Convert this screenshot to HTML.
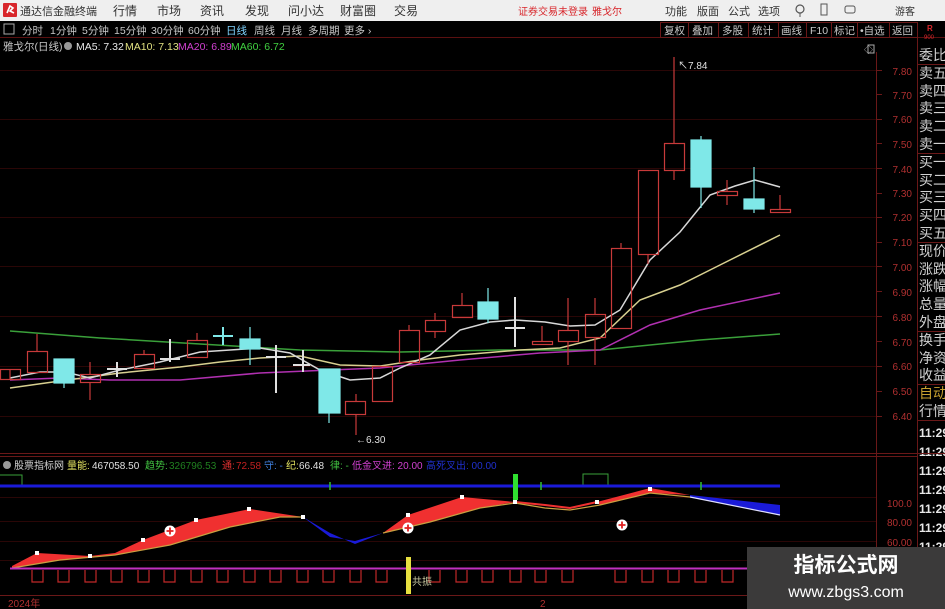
<!DOCTYPE html>
<html><head><meta charset="utf-8">
<style>
html,body{margin:0;padding:0;background:#000;width:945px;height:609px;overflow:hidden}
svg{display:block}
text{font-family:"Liberation Sans","Noto Sans CJK SC",sans-serif}
</style></head><body>
<svg width="945" height="609" viewBox="0 0 945 609" xmlns="http://www.w3.org/2000/svg">
<rect width="945" height="609" fill="#000"/>
<rect x="0" y="0" width="945" height="21" fill="#efefef"/>
<rect x="3" y="3" width="14" height="14" fill="#d8262b" rx="1"/>
<path d="M7 13 L10 6 L13 8 L10 11 L14 13" stroke="#fff" stroke-width="1.6" fill="none"/>
<g font-size="11" fill="#333">
<text x="20" y="15">通达信金融终端</text>
<text x="113" y="15" font-size="12">行情</text><text x="157" y="15" font-size="12">市场</text><text x="200" y="15" font-size="12">资讯</text><text x="245" y="15" font-size="12">发现</text><text x="288" y="15" font-size="12">问小达</text><text x="340" y="15" font-size="12">财富圈</text><text x="394" y="15" font-size="12">交易</text>
<text x="518" y="15" fill="#d8262b" font-size="10">证券交易未登录</text><text x="592" y="15" fill="#d8262b" font-size="10">雅戈尔</text>
<text x="665" y="15">功能</text><text x="697" y="15">版面</text><text x="728" y="15">公式</text><text x="758" y="15">选项</text>
<text x="895" y="15" font-size="10">游客</text>
</g>
<circle cx="800" cy="9" r="4" fill="none" stroke="#555" stroke-width="1.2"/><path d="M800 13v4" stroke="#555"/>
<rect x="821" y="4" width="6" height="11" fill="none" stroke="#555"/>
<rect x="845" y="6" width="10" height="7" rx="2" fill="none" stroke="#555"/>
<line x1="0" y1="37.5" x2="945" y2="37.5" stroke="#5a1010"/>
<rect x="4" y="24" width="10" height="10" fill="none" stroke="#aaa"/>
<g font-size="10.5" fill="#c8c8c8">
<text x="22" y="34">分时</text><text x="50" y="34">1分钟</text><text x="82" y="34">5分钟</text><text x="114" y="34">15分钟</text><text x="151" y="34">30分钟</text><text x="188" y="34">60分钟</text><text x="226" y="34" fill="#7fd3ff">日线</text><text x="254" y="34">周线</text><text x="281" y="34">月线</text><text x="308" y="34">多周期</text><text x="344" y="34">更多 ›</text>
</g>
<g stroke="#6a1818" fill="none">
<rect x="660.5" y="22.5" width="257" height="15"/>
<path d="M688.5 22v16M718.5 22v16M748.5 22v16M778.5 22v16M806.5 22v16M831.5 22v16M857.5 22v16M889.5 22v16"/>
</g>
<g font-size="10.5" fill="#c8c8c8">
<text x="664" y="34">复权</text><text x="692" y="34">叠加</text><text x="722" y="34">多股</text><text x="752" y="34">统计</text><text x="781" y="34">画线</text><text x="810" y="34">F10</text><text x="834" y="34">标记</text><text x="860" y="34">•自选</text><text x="892" y="34">返回</text>
</g>
<text x="927" y="31" fill="#d8262b" font-size="8" font-weight="bold">R</text>
<text x="924" y="39" fill="#d8262b" font-size="6">900</text>
<g font-size="10.5">
<text x="3" y="50" fill="#c8c8c8">雅戈尔(日线)</text>
<circle cx="68" cy="46" r="4" fill="#999"/>
<text x="76" y="50" fill="#e8e8e8">MA5: 7.32</text>
<text x="125" y="50" fill="#e0e080">MA10: 7.13</text>
<text x="178" y="50" fill="#d040d0">MA20: 6.89</text>
<text x="231" y="50" fill="#40d040">MA60: 6.72</text>
</g>
<g stroke="#2a0606" stroke-width="1">
<path d="M0 70.5H876M0 119.5H876M0 168.5H876M0 217.5H876M0 266.5H876M0 316.5H876M0 366.5H876M0 416.5H876"/>
</g>
<line x1="876.5" y1="52" x2="876.5" y2="595" stroke="#6a1818"/>
<line x1="917.5" y1="38" x2="917.5" y2="609" stroke="#6a1818"/>
<g font-size="10" fill="#b03030" text-anchor="end">
<text x="912" y="75">7.80</text><text x="912" y="99">7.70</text><text x="912" y="123">7.60</text><text x="912" y="148">7.50</text><text x="912" y="173">7.40</text><text x="912" y="197">7.30</text><text x="912" y="221">7.20</text><text x="912" y="246">7.10</text><text x="912" y="271">7.00</text><text x="912" y="296">6.90</text><text x="912" y="321">6.80</text><text x="912" y="346">6.70</text><text x="912" y="370">6.60</text><text x="912" y="395">6.50</text><text x="912" y="420">6.40</text>
</g>
<g stroke="#6a1818"><path d="M876 70.5h6M876 94.5h6M876 119.5h6M876 143.5h6M876 168.5h6M876 193.5h6M876 217.5h6M876 242.5h6M876 266.5h6M876 291.5h6M876 316.5h6M876 341.5h6M876 366.5h6M876 391.5h6M876 416.5h6"/></g>
<text x="864" y="53" fill="#aaa" font-size="9">◇</text><rect x="868" y="45" width="6" height="8" fill="none" stroke="#aaa"/>
<g font-size="14" fill="#d0d0d0">
<text x="919" y="60">委比</text>
<text x="919" y="78">卖五</text><text x="919" y="96">卖四</text><text x="919" y="113">卖三</text><text x="919" y="131">卖二</text><text x="919" y="149">卖一</text>
<text x="919" y="167">买一</text><text x="919" y="185">买二</text><text x="919" y="202">买三</text><text x="919" y="220">买四</text><text x="919" y="238">买五</text>
<text x="919" y="256">现价</text><text x="919" y="274">涨跌</text><text x="919" y="291">涨幅</text><text x="919" y="309">总量</text><text x="919" y="327">外盘</text>
<text x="919" y="345">换手</text><text x="919" y="363">净资</text><text x="919" y="380">收益</text>
<text x="919" y="398" fill="#c8a030">自动</text><text x="919" y="416">行情</text>
</g>
<g stroke="#6a1818"><path d="M917 64.5H945M917 153.5H945M917 242.5H945M917 331.5H945M917 384.5H945M917 420.5H945"/></g>
<g font-size="12" fill="#e8e8e8" font-weight="bold">
<text x="919" y="437">11:29</text><text x="919" y="456">11:29</text><text x="919" y="475">11:29</text><text x="919" y="494">11:29</text><text x="919" y="513">11:29</text><text x="919" y="532">11:29</text><text x="919" y="551">11:29</text><text x="919" y="570">11:29</text><text x="919" y="590">11:29</text>
</g>
<g fill="none" stroke-width="1.5">
<polyline stroke="#3aa03a" points="10,331 100,338 200,344 300,350 400,352 500,350 600,350 700,340 780,334"/>
<polyline stroke="#b030b0" points="10,380 60,378 110,380 180,380 260,373 330,370 380,368 460,360 540,353 600,350 650,325 700,310 780,293"/>
<polyline stroke="#d8d090" points="10,388 60,381 120,373 180,367 220,362 260,358 300,356 340,365 380,366 420,360 460,355 520,350 560,348 600,338 640,300 680,285 720,265 780,235"/>
<polyline stroke="#d8d8d8" points="10,378 40,372 65,372 90,378 120,370 160,362 200,352 230,350 260,348 290,353 320,370 350,380 380,378 400,368 430,355 460,330 490,322 515,320 545,322 570,326 595,325 620,310 650,260 680,232 710,195 735,186 755,180 780,187"/>
</g>
<g stroke-width="1.2">
<g stroke="#c83a3a" fill="none">
<path d="M10 369v10"/><rect x="0.5" y="369.5" width="20" height="10"/>
<path d="M37 334v17"/><rect x="27.5" y="351.5" width="20" height="21"/>
<path d="M90 362v12M90 382v18"/><rect x="80.5" y="374.5" width="20" height="8"/>
<path d="M144 350v4"/><rect x="134.5" y="354.5" width="20" height="14"/>
<path d="M197 333v7"/><rect x="187.5" y="340.5" width="20" height="17"/>
<path d="M356 394v7M356 414v21"/><rect x="345.5" y="401.5" width="20" height="13"/>
<rect x="372.5" y="366.5" width="20" height="35"/>
<path d="M409 325v5"/><rect x="399.5" y="330.5" width="20" height="32"/>
<path d="M435 313v7M435 331v7"/><rect x="425.5" y="320.5" width="20" height="11"/>
<path d="M462 293v12"/><rect x="452.5" y="305.5" width="20" height="12"/>
<path d="M542 326v15"/><rect x="532.5" y="341.5" width="20" height="3"/>
<path d="M568 298v32M568 341v24"/><rect x="558.5" y="330.5" width="20" height="11"/>
<path d="M595 298v16M595 337v28"/><rect x="585.5" y="314.5" width="20" height="23"/>
<path d="M621 243v5"/><rect x="611.5" y="248.5" width="20" height="80"/>
<path d="M648 254v10"/><rect x="638.5" y="170.5" width="20" height="84"/>
<path d="M674 57v86M674 170v10"/><rect x="664.5" y="143.5" width="20" height="27"/>
<path d="M727 180v12M727 195v10"/><rect x="717.5" y="191.5" width="20" height="4"/>
<path d="M780 195v15"/><rect x="770.5" y="209.5" width="20" height="3"/>
</g>
<g stroke="#7fe8e8" fill="#7fe8e8">
<rect x="54" y="359" width="20" height="24"/><path d="M64 383v5"/>
<path d="M223 327v18M213 336h20" stroke-width="2"/>
<rect x="240" y="339" width="20" height="10"/><path d="M250 327v38"/>
<rect x="319" y="369" width="21" height="44"/><path d="M329 413v10"/>
<rect x="478" y="302" width="20" height="17"/><path d="M488 288v35"/>
<rect x="691" y="140" width="20" height="47"/><path d="M701 136v72"/>
<rect x="744" y="199" width="20" height="10"/><path d="M754 167v46"/>
</g>
<g stroke="#e0e0e0" fill="none">
<path d="M117 362v15M107 369h20" stroke-width="2"/>
<path d="M170 339v23M160 359h20" stroke-width="2"/>
<path d="M276 345v48M266 357h20" stroke-width="2"/>
<path d="M303 350v22M293 365h17" stroke-width="2"/>
<path d="M515 297v50M505 328h20" stroke-width="2"/>
</g>
</g>
<text x="678" y="69" fill="#e0e0e0" font-size="10">↖7.84</text>
<text x="356" y="443" fill="#e0e0e0" font-size="10">←6.30</text>
<line x1="0" y1="453.5" x2="945" y2="453.5" stroke="#6a1818"/>
<line x1="0" y1="456.5" x2="917" y2="456.5" stroke="#6a1818"/>
<g font-size="10">
<circle cx="7" cy="465" r="4" fill="#999"/>
<text x="14" y="469" fill="#d0d0d0">股票指标网</text>
<text x="67" y="469" fill="#e0e060">量能:</text><text x="92" y="469" fill="#e0e0e0">467058.50</text>
<text x="145" y="469" fill="#40c040">趋势:</text><text x="169" y="469" fill="#208020">326796.53</text>
<text x="222" y="469" fill="#e03030">通:</text><text x="236" y="469" fill="#c02020">72.58</text>
<text x="264" y="469" fill="#4080e0">守: -</text>
<text x="286" y="469" fill="#e0e060">纪:</text><text x="299" y="469" fill="#e0e0e0">66.48</text>
<text x="330" y="469" fill="#40c040">律: -</text>
<text x="352" y="469" fill="#d040d0">低金叉进: 20.00</text>
<text x="426" y="469" fill="#2030d0">高死叉出: 00.00</text>
</g>
<g font-size="10" fill="#b03030" text-anchor="end">
<text x="912" y="507">100.0</text><text x="912" y="526">80.00</text><text x="912" y="546">60.00</text><text x="912" y="565">40.00</text>
</g>
<g stroke="#2a0606"><path d="M0 497.5H876M0 521.5H876M0 541.5H876M0 560.5H876"/></g>
<path d="M0 475h22v10" stroke="#3aa03a" fill="none"/>
<path d="M583 485v-11h25v11" stroke="#3aa03a" fill="none"/>
<line x1="0" y1="486" x2="780" y2="486" stroke="#1a1ad8" stroke-width="3"/>
<rect x="513" y="474" width="5" height="26" fill="#30e030"/>
<g stroke="#30c030" stroke-width="1.5"><path d="M330 482v8M541 482v8M701 482v8"/></g>
<polygon fill="#f03030" points="12,566 37,553 90,556 115,553 143,540 196,520 250,509 303,517 280,517 230,527 170,545 115,555 60,560 12,568"/>
<polygon fill="#1a1ad8" points="303,517 330,533 355,544 383,533 355,541 330,537"/>
<polygon fill="#f03030" points="383,533 408,515 462,497 515,502 480,508 430,522"/>
<polyline fill="none" stroke="#f03030" stroke-width="2" points="515,502 545,505 570,508 597,502"/>
<polygon fill="#f03030" points="597,502 650,488 690,495 650,493 600,505"/>
<polygon fill="#1a1ad8" points="690,495 780,505 780,515 690,497"/>
<polyline fill="none" stroke="#c8a040" stroke-width="1.2" points="12,568 60,560 115,555 170,545 230,527 280,517 303,517"/>
<polyline fill="none" stroke="#c8a040" stroke-width="1.2" points="383,533 430,522 480,508 515,503 545,508 570,510 600,505 650,493 690,497"/>
<polyline fill="none" stroke="#e0e0ff" stroke-width="1.2" points="690,497 780,515"/>
<g fill="#fff"><rect x="35" y="551" width="4" height="4"/><rect x="88" y="554" width="4" height="4"/><rect x="141" y="538" width="4" height="4"/><rect x="194" y="518" width="4" height="4"/><rect x="247" y="507" width="4" height="4"/><rect x="301" y="515" width="4" height="4"/><rect x="406" y="513" width="4" height="4"/><rect x="460" y="495" width="4" height="4"/><rect x="513" y="500" width="4" height="4"/><rect x="595" y="500" width="4" height="4"/><rect x="648" y="487" width="4" height="4"/></g>
<g><circle cx="170" cy="531" r="5.5" fill="#fff"/><path d="M170 527.5v7M166.5 531h7" stroke="#e02020" stroke-width="1.8"/>
<circle cx="408" cy="528" r="5.5" fill="#fff"/><path d="M408 524.5v7M404.5 528h7" stroke="#e02020" stroke-width="1.8"/>
<circle cx="622" cy="525" r="5.5" fill="#fff"/><path d="M622 521.5v7M618.5 525h7" stroke="#e02020" stroke-width="1.8"/></g>
<line x1="10" y1="568.5" x2="747" y2="568.5" stroke="#c030c0" stroke-width="2"/>
<g stroke="#c02828" fill="none" stroke-width="1.2">
<path d="M32 570v12h11v-12M58 570v12h11v-12M85 570v12h11v-12M111 570v12h11v-12M138 570v12h11v-12M164 570v12h11v-12M191 570v12h11v-12M217 570v12h11v-12M244 570v12h11v-12M270 570v12h11v-12M297 570v12h11v-12M323 570v12h11v-12M350 570v12h11v-12M376 570v12h11v-12M429 570v12h11v-12M456 570v12h11v-12M482 570v12h11v-12M510 570v12h11v-12M535 570v12h11v-12M562 570v12h11v-12M615 570v12h11v-12M642 570v12h11v-12M668 570v12h11v-12M695 570v12h11v-12M722 570v12h11v-12"/>
</g>
<rect x="406" y="557" width="5" height="37" fill="#e8e040"/>
<text x="412" y="585" fill="#c8c8a0" font-size="10">共振</text>
<line x1="0" y1="595.5" x2="876" y2="595.5" stroke="#6a1818"/>
<text x="8" y="607" fill="#b03030" font-size="10">2024年</text>
<text x="540" y="607" fill="#b03030" font-size="10">2</text>
<rect x="747" y="547" width="198" height="62" fill="#3b3a3a"/>
<text x="846" y="572" fill="#fff" font-size="21" font-weight="bold" text-anchor="middle">指标公式网</text>
<text x="846" y="597" fill="#fff" font-size="16" text-anchor="middle">www.zbgs3.com</text>
</svg>
</body></html>
